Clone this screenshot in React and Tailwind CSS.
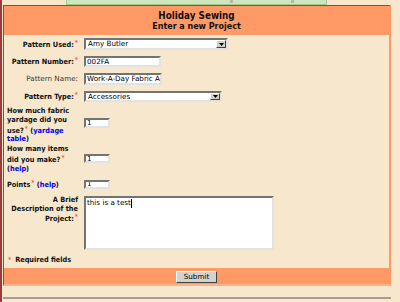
import React from "react";

const inset =
  "bg-white border-2 border-t-[#737373] border-l-[#737373] border-r-[#e2e2e2] border-b-[#e2e2e2]";
const valFont = "font-normal font-['DejaVu_Sans',sans-serif] text-[7.2px] leading-none text-black";

function Star() {
  return <span className="text-[#ff2a2a] font-normal text-[7px] align-[2px] ml-[1px]">*</span>;
}

function Select({ className, value }) {
  return (
    <div className={`flex ${inset} ${className}`}>
      <div className={`flex-1 pl-[2px] flex items-center whitespace-nowrap ${valFont}`}>{value}</div>
      <div className="w-[10px] bg-[#d4d0c8] border border-t-white border-l-white border-r-[#404040] border-b-[#404040] flex items-center justify-center">
        <svg width="5" height="3" viewBox="0 0 5 3">
          <path d="M0 0h5L2.5 3z" fill="#000" />
        </svg>
      </div>
    </div>
  );
}

function Input({ className, value }) {
  return (
    <div className={`flex items-center pl-[1px] whitespace-nowrap overflow-hidden ${inset} ${valFont} ${className}`}>
      {value}
    </div>
  );
}

function Link({ children }) {
  return <span className="text-[#0000ee]">{children}</span>;
}

export default function App() {
  return (
    <div className="w-[400px] h-[302px] overflow-hidden bg-[#F6E7CD] border-l-2 border-[#9a3c3c] text-black font-['DejaVu_Sans_Condensed','DejaVu_Sans',sans-serif]">
      <div className="ml-[64px] w-[261px] h-[5px] bg-[#cde6bd] border-x border-b border-[#9fca8c] flex">
        <span className="ml-[163px] w-[3px] h-[3px] bg-[#b3bcab]" />
        <span className="ml-[58px] w-[3px] h-[3px] bg-[#b3bcab]" />
      </div>

      <div className="ml-[1px] w-[388px] border-t border-l border-t-[#6d5a4f] border-l-[#6d5a4f] border-r-2 border-b-2 border-r-[#fb9a68] border-b-[#fbb38a]">
        <div className="h-[29px] bg-[#FF9966] pt-[4px] flex flex-col items-center text-[#111]">
          <div className="text-[9.8px] leading-[11px] font-bold">Holiday Sewing</div>
          <div className="text-[8.9px] leading-[11px] font-bold">Enter a new Project</div>
        </div>

        <div className="flex flex-col text-[7.3px] leading-[8.7px] font-bold text-[#111]">
          <div className="h-[18px] flex items-center gap-[5px]">
            <div className="w-[75px] pl-[3px] pr-[1px] text-right">
              Pattern Used:<Star />
            </div>
            <Select className="w-[144px] h-[12px]" value="Amy Butler" />
          </div>

          <div className="h-[17px] flex items-center gap-[5px]">
            <div className="w-[75px] pl-[3px] pr-[1px] text-right">
              Pattern Number:<Star />
            </div>
            <Input className="w-[77px] h-[11px]" value="002FA" />
          </div>

          <div className="h-[18px] flex items-center gap-[5px]">
            <div className="w-[75px] pl-[3px] pr-[1px] text-right font-normal font-['DejaVu_Sans',sans-serif] text-[7.2px] text-[#3a3a3a]">
              Pattern Name:
            </div>
            <Input className="w-[78px] h-[12px]" value="Work-A-Day Fabric A" />
          </div>

          <div className="h-[17px] flex items-center gap-[5px]">
            <div className="w-[75px] pl-[3px] pr-[1px] text-right">
              Pattern Type:<Star />
            </div>
            <Select className="w-[138px] h-[11px]" value="Accessories" />
          </div>

          <div className="h-[41px] flex items-center gap-[5px]">
            <div className="w-[75px] pl-[3px] pr-[1px]">
              How much fabric
              <br />
              yardage did you
              <br />
              use?<Star /> (<Link>yardage</Link>
              <br />
              <Link>table</Link>)
            </div>
            <Input className="w-[26px] h-[10px] mb-[5px]" value="1" />
          </div>

          <div className="h-[27px] flex items-center gap-[5px]">
            <div className="w-[75px] pl-[3px] pr-[1px]">
              How many items
              <br />
              did you make?<Star />
              <br />
              (<Link>help</Link>)
            </div>
            <Input className="w-[26px] h-[9px] mb-[2px]" value="1" />
          </div>

          <div className="h-[22px] flex items-center gap-[5px]">
            <div className="w-[75px] pl-[3px] pr-[1px]">
              Points<Star /> (<Link>help</Link>)
            </div>
            <Input className="w-[26px] h-[9px]" value="1" />
          </div>

          <div className="h-[58px] flex items-start gap-[5px]">
            <div className="w-[75px] pl-[3px] pr-[1px] pt-[1px] text-right">
              A Brief
              <br />
              Description of the
              <br />
              Project:<Star />
            </div>
            <div className={`mt-[1px] w-[190px] h-[54px] px-[1px] pt-[1px] ${inset} ${valFont} leading-[9px]`}>
              this is a test
              <span className="inline-block w-px h-[9px] bg-black align-top" />
            </div>
          </div>

          <div className="h-[15px] flex items-center pl-[3px]">
            <Star />
            <span className="ml-[4px]">Required fields</span>
          </div>
        </div>

        <div className="h-[16px] bg-[#FF9966] flex justify-center pt-[3px]">
          <div className="w-[41px] h-[12px] bg-[#d6d2ca] border border-t-white border-l-white border-r-[#404040] border-b-[#404040] flex items-center justify-center font-['DejaVu_Sans',sans-serif] text-[7.2px] leading-none">
            Submit
          </div>
        </div>
      </div>

      <div className="mt-[11px] ml-[1px] w-[388px] h-[2px] bg-[#a59d93]" />
    </div>
  );
}
